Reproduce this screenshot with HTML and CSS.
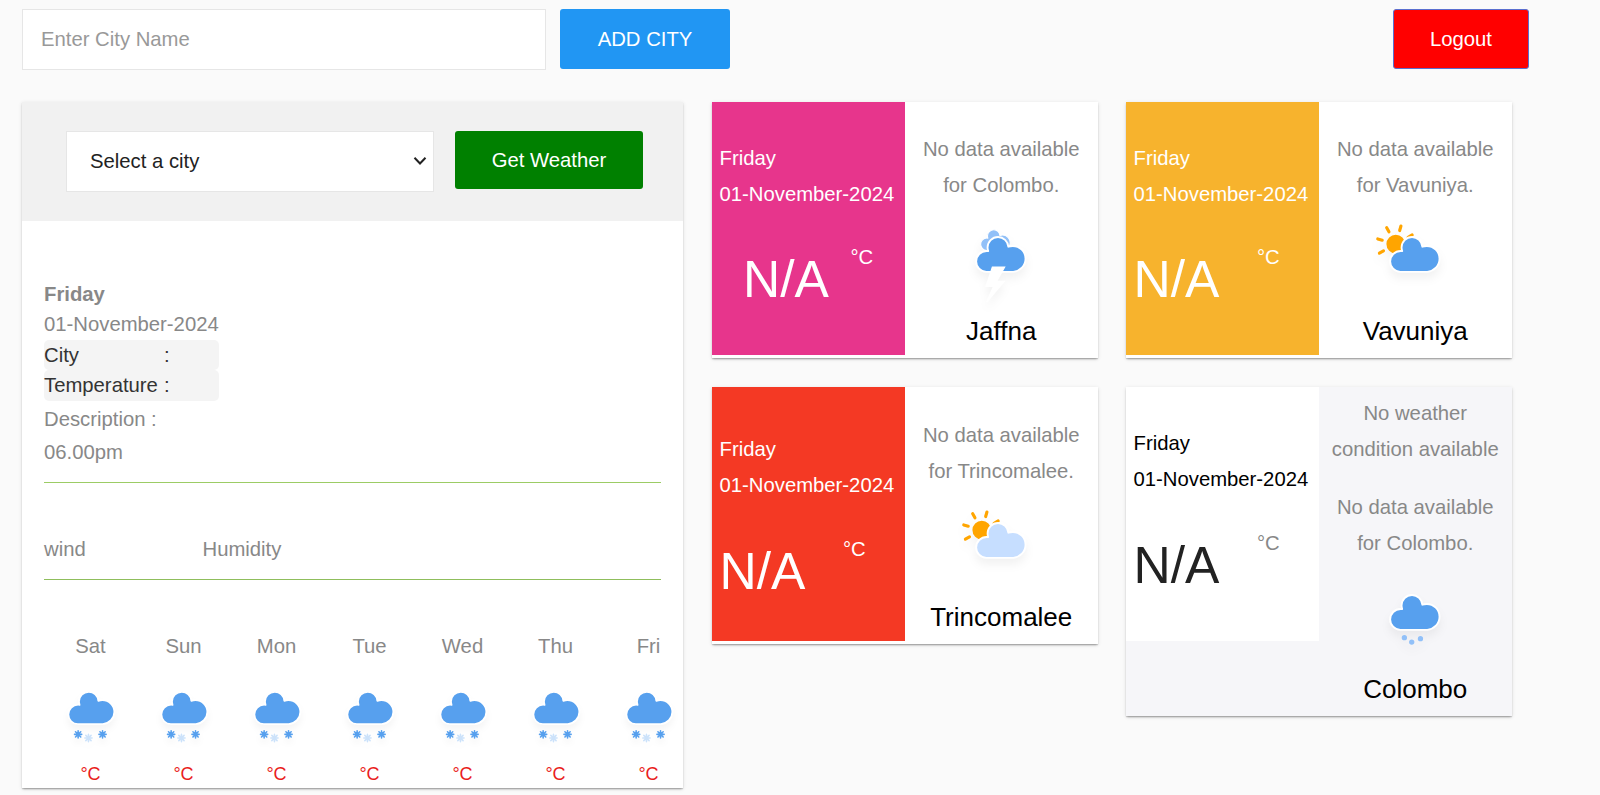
FILE: index.html
```html
<!DOCTYPE html>
<html lang="en">
<head>
<meta charset="utf-8">
<title>Weather</title>
<link rel="stylesheet" href="styles.css">
</head>
<body>
<svg class="defs" width="0" height="0">
  <defs>
    <path id="cloud" d="M47.7,35.4c0-4.6-3.7-8.2-8.2-8.2c-1,0-1.9,0.2-2.8,0.5c-0.3-3.4-3.1-6.2-6.6-6.2c-3.7,0-6.7,3-6.7,6.7c0,0.8,0.2,1.6,0.4,2.3c-0.3-0.1-0.7-0.1-1-0.1c-3.7,0-6.7,3-6.7,6.7c0,3.6,2.9,6.6,6.5,6.7l17.2,0C44.2,43.3,47.7,39.8,47.7,35.4z" stroke="#fff" stroke-width="1.2" stroke-linejoin="round"/>
    <g id="sun" stroke="orange" stroke-width="2" stroke-linecap="round">
      <circle r="5" fill="orange"/>
      <path d="M0,-9v-3" transform="rotate(16)"/>
      <path d="M0,-9v-3" transform="rotate(61)"/>
      <path d="M0,-9v-3" transform="rotate(-29)"/>
      <path d="M0,-9v-3" transform="rotate(-74)"/>
      <path d="M0,-9v-3" transform="rotate(-119)"/>
    </g>
    <path id="flake" d="M0,-2.5V2.5M-2.5,0H2.5M-1.8,-1.8L1.8,1.8M-1.8,1.8L1.8,-1.8" fill="none" stroke="#57a0ee" stroke-width="1.1" stroke-linecap="round"/>
    <g id="snow">
      <use href="#cloud" y="-1" fill="#57a0ee"/>
      <use href="#flake" x="22.8" y="49.8"/>
      <use href="#flake" x="29.9" y="52.3" opacity=".3"/>
      <use href="#flake" x="39.6" y="49.8"/>
    </g>
  </defs>
</svg>

<header class="topbar">
  <input class="city-input" type="text" placeholder="Enter City Name">
  <button class="btn btn-add">ADD CITY</button>
  <button class="btn btn-logout">Logout</button>
</header>

<main class="board">
  <section class="panel">
    <div class="panel-head">
      <div class="select-wrap">
        <select class="city-select"><option>Select a city</option></select>
        <svg class="chevron" width="14" height="10" viewBox="0 0 14 10"><path d="M1.5,1.8L7,7.5L12.5,1.8" fill="none" stroke="#222" stroke-width="2"/></svg>
      </div>
      <button class="btn btn-get">Get Weather</button>
    </div>
    <div class="panel-body">
      <div class="now">
        <b class="row">Friday</b>
        <span class="row">01-November-2024</span>
        <span class="chip"><span class="chip-name">City</span>:</span>
        <span class="chip"><span class="chip-name">Temperature</span>:</span>
        <span class="detail detail-first">Description :</span>
        <span class="detail">06.00pm</span>
      </div>
      <div class="measures"><span class="wind">wind</span><span>Humidity</span></div>
      <div class="forecast">
        <div class="day"><span>Sat</span><svg class="day-icon" viewBox="0 0 64 64"><use href="#snow"/></svg><span class="deg">°C</span></div>
        <div class="day"><span>Sun</span><svg class="day-icon" viewBox="0 0 64 64"><use href="#snow"/></svg><span class="deg">°C</span></div>
        <div class="day"><span>Mon</span><svg class="day-icon" viewBox="0 0 64 64"><use href="#snow"/></svg><span class="deg">°C</span></div>
        <div class="day"><span>Tue</span><svg class="day-icon" viewBox="0 0 64 64"><use href="#snow"/></svg><span class="deg">°C</span></div>
        <div class="day"><span>Wed</span><svg class="day-icon" viewBox="0 0 64 64"><use href="#snow"/></svg><span class="deg">°C</span></div>
        <div class="day"><span>Thu</span><svg class="day-icon" viewBox="0 0 64 64"><use href="#snow"/></svg><span class="deg">°C</span></div>
        <div class="day"><span>Fri</span><svg class="day-icon" viewBox="0 0 64 64"><use href="#snow"/></svg><span class="deg">°C</span></div>
      </div>
    </div>
  </section>

  <section class="cities">
    <article class="card">
      <div class="card-date pink">
        <span>Friday</span><span>01-November-2024</span>
        <div class="temp temp-indent"><span class="value">N/A</span><span class="unit">°C</span></div>
      </div>
      <div class="card-info">
        <p class="note">No data available<br>for Colombo.</p>
        <svg class="card-icon" viewBox="0 0 64 64">
          <use href="#cloud" fill="#91c0f8" transform="translate(9.3,2.9) scale(.6)"/>
          <use href="#cloud" y="-1" fill="#57a0ee"/>
          <polygon points="14.3,-2.9 20.5,-2.9 16.4,4.3 20.3,4.3 11.5,14.6 14.9,6.9 11.1,6.9" transform="translate(8.3,43.4) scale(1.27)" fill="#fff" stroke="#fff" stroke-width=".6"/>
        </svg>
        <h2 class="city">Jaffna</h2>
      </div>
    </article>

    <article class="card">
      <div class="card-date amber">
        <span>Friday</span><span>01-November-2024</span>
        <div class="temp"><span class="value">N/A</span><span class="unit">°C</span></div>
      </div>
      <div class="card-info">
        <p class="note">No data available<br>for Vavuniya.</p>
        <svg class="card-icon" viewBox="0 0 64 64">
          <use href="#sun" x="19.7" y="25"/>
          <use href="#cloud" y="-1" fill="#57a0ee"/>
        </svg>
        <h2 class="city">Vavuniya</h2>
      </div>
    </article>

    <article class="card">
      <div class="card-date red">
        <span>Friday</span><span>01-November-2024</span>
        <div class="temp"><span class="value">N/A</span><span class="unit">°C</span></div>
      </div>
      <div class="card-info">
        <p class="note">No data available<br>for Trincomalee.</p>
        <svg class="card-icon" viewBox="0 0 64 64">
          <use href="#sun" x="19.7" y="25"/>
          <use href="#cloud" y="-1" fill="#c6deff"/>
        </svg>
        <h2 class="city">Trincomalee</h2>
      </div>
    </article>

    <article class="card card-gray">
      <div class="card-date white">
        <span>Friday</span><span>01-November-2024</span>
        <div class="temp"><span class="value">N/A</span><span class="unit">°C</span></div>
      </div>
      <div class="card-info card-info-tall">
        <p class="note note-first">No weather<br>condition available</p>
        <p class="note">No data available<br>for Colombo.</p>
        <svg class="card-icon" viewBox="0 0 64 64">
          <use href="#cloud" y="-1" fill="#57a0ee"/>
          <g fill="#91c0f8"><circle cx="25.2" cy="47.8" r="1.7"/><circle cx="29.9" cy="50.6" r="1.7"/><circle cx="35.5" cy="48.4" r="1.7"/></g>
        </svg>
        <h2 class="city">Colombo</h2>
      </div>
    </article>
  </section>
</main>
</body>
</html>
```

FILE: styles.css
```css
* { box-sizing: border-box; }

body {
  margin: 0;
  padding: 9px 22px 0;
  height: 795px;
  overflow: hidden;
  background: #fafafa;
  color: #888;
  font: 20.3px/30px "Liberation Sans", Arial, sans-serif;
}

.defs { display: block; }

.topbar { display: flex; align-items: flex-start; height: 92.6px; }

.city-input {
  width: 524px;
  height: 61px;
  padding: 0 18px;
  border: 1px solid #e6e6e6;
  background: #fff;
  font: inherit;
}
.city-input::placeholder { color: #999; opacity: 1; }

.btn {
  border: 0;
  border-radius: 3px;
  padding: 0;
  color: #fff;
  font: inherit;
}
.btn-add { width: 170px; height: 60px; margin-left: 14px; background: #2196f3; }
.btn-logout { width: 136px; height: 60px; margin-left: 663px; border: 1px solid #5a6fd0; background: #f00; }
.btn-get { width: 188px; height: 58px; margin-left: 21px; background: #008000; }

.board { display: flex; align-items: flex-start; gap: 29px; }

.panel, .card {
  background: #fff;
  box-shadow: 0 2px 2px -1px rgba(0,0,0,.24), 0 1px 1px rgba(0,0,0,.12), 0 1px 4px rgba(0,0,0,.12);
}

.panel { width: 661px; height: 686px; }
.panel-head { display: flex; height: 119px; padding: 29px 0 0 44px; background: #f1f1f1; }

.select-wrap { position: relative; width: 368px; height: 61px; }
.city-select {
  appearance: none;
  width: 100%;
  height: 100%;
  padding: 0 23px;
  border: 1px solid #e6e6e6;
  border-radius: 0;
  background: #fff;
  color: #222;
  font: inherit;
}
.chevron { position: absolute; right: 7px; top: 25px; }

.panel-body { padding: 59.4px 22px 0; }

.now {
  display: flex;
  flex-direction: column;
  align-items: flex-start;
  height: 203px;
  border-bottom: 1px solid #9ccc65;
}
.row { height: 30px; line-height: 29px; }
.chip {
  display: flex;
  width: 175px;
  height: 30.4px;
  border-radius: 5px;
  background: #f4f4f4;
  color: #333;
}
.chip-name { width: 120px; }
.detail { line-height: 33px; }
.detail-first { margin-top: 2px; }

.measures {
  display: flex;
  height: 97px;
  padding-top: 51px;
  border-bottom: 1px solid #8fbe5c;
}
.wind { width: 158.5px; }

.forecast { display: flex; width: 651px; padding-top: 51.2px; }
.day { display: flex; flex: none; width: 93px; flex-direction: column; align-items: center; }
.day-icon { width: 93px; height: 93px; margin: .6px 0 .4px 1px; filter: drop-shadow(0 5px 3px rgba(0,0,0,.04)); }
.deg { color: #e91c1c; font-size: 18px; line-height: 38px; }

.cities { display: grid; grid-template-columns: 385.5px 385.5px; gap: 29px 28.5px; align-items: start; }

.card { display: flex; height: 256.5px; }
.card-gray { height: 329px; background: #f6f6f9; }

.card-date {
  display: flex;
  flex-direction: column;
  width: 193px;
  height: 253.6px;
  padding: 38px 0 0 7.5px;
  line-height: 36px;
  white-space: nowrap;
}
.pink { background: #e7358c; color: #fff; }
.amber { background: #f7b32d; color: #fff; }
.red { padding-top: 44px; background: #f43924; color: #fff; }
.white { background: #fff; color: #000; }

.temp { display: flex; align-items: flex-start; margin-top: 27.6px; line-height: 36px; }
.value { width: 123.5px; margin: 5.2px 0 0; font-size: 51.5px; line-height: 70px; }
.white .value { color: #222; }
.white .unit { color: #888; }
.temp-indent { margin-left: 23.5px; }
.temp-indent .value { width: 107.5px; }

.card-info {
  display: flex;
  flex: 1;
  flex-direction: column;
  align-items: center;
  padding-top: 29.8px;
  text-align: center;
}
.card-info-tall { padding-top: 7.8px; }
.note { margin: 0; line-height: 36px; }
.note-first { margin-bottom: 22px; }
.card-icon { width: 100px; height: 100px; margin-top: 1.8px; filter: drop-shadow(0 6px 4px rgba(0,0,0,.05)); }
.city { margin: 6px 0 0; color: #000; font-size: 26px; font-weight: 400; line-height: 40px; }
```
